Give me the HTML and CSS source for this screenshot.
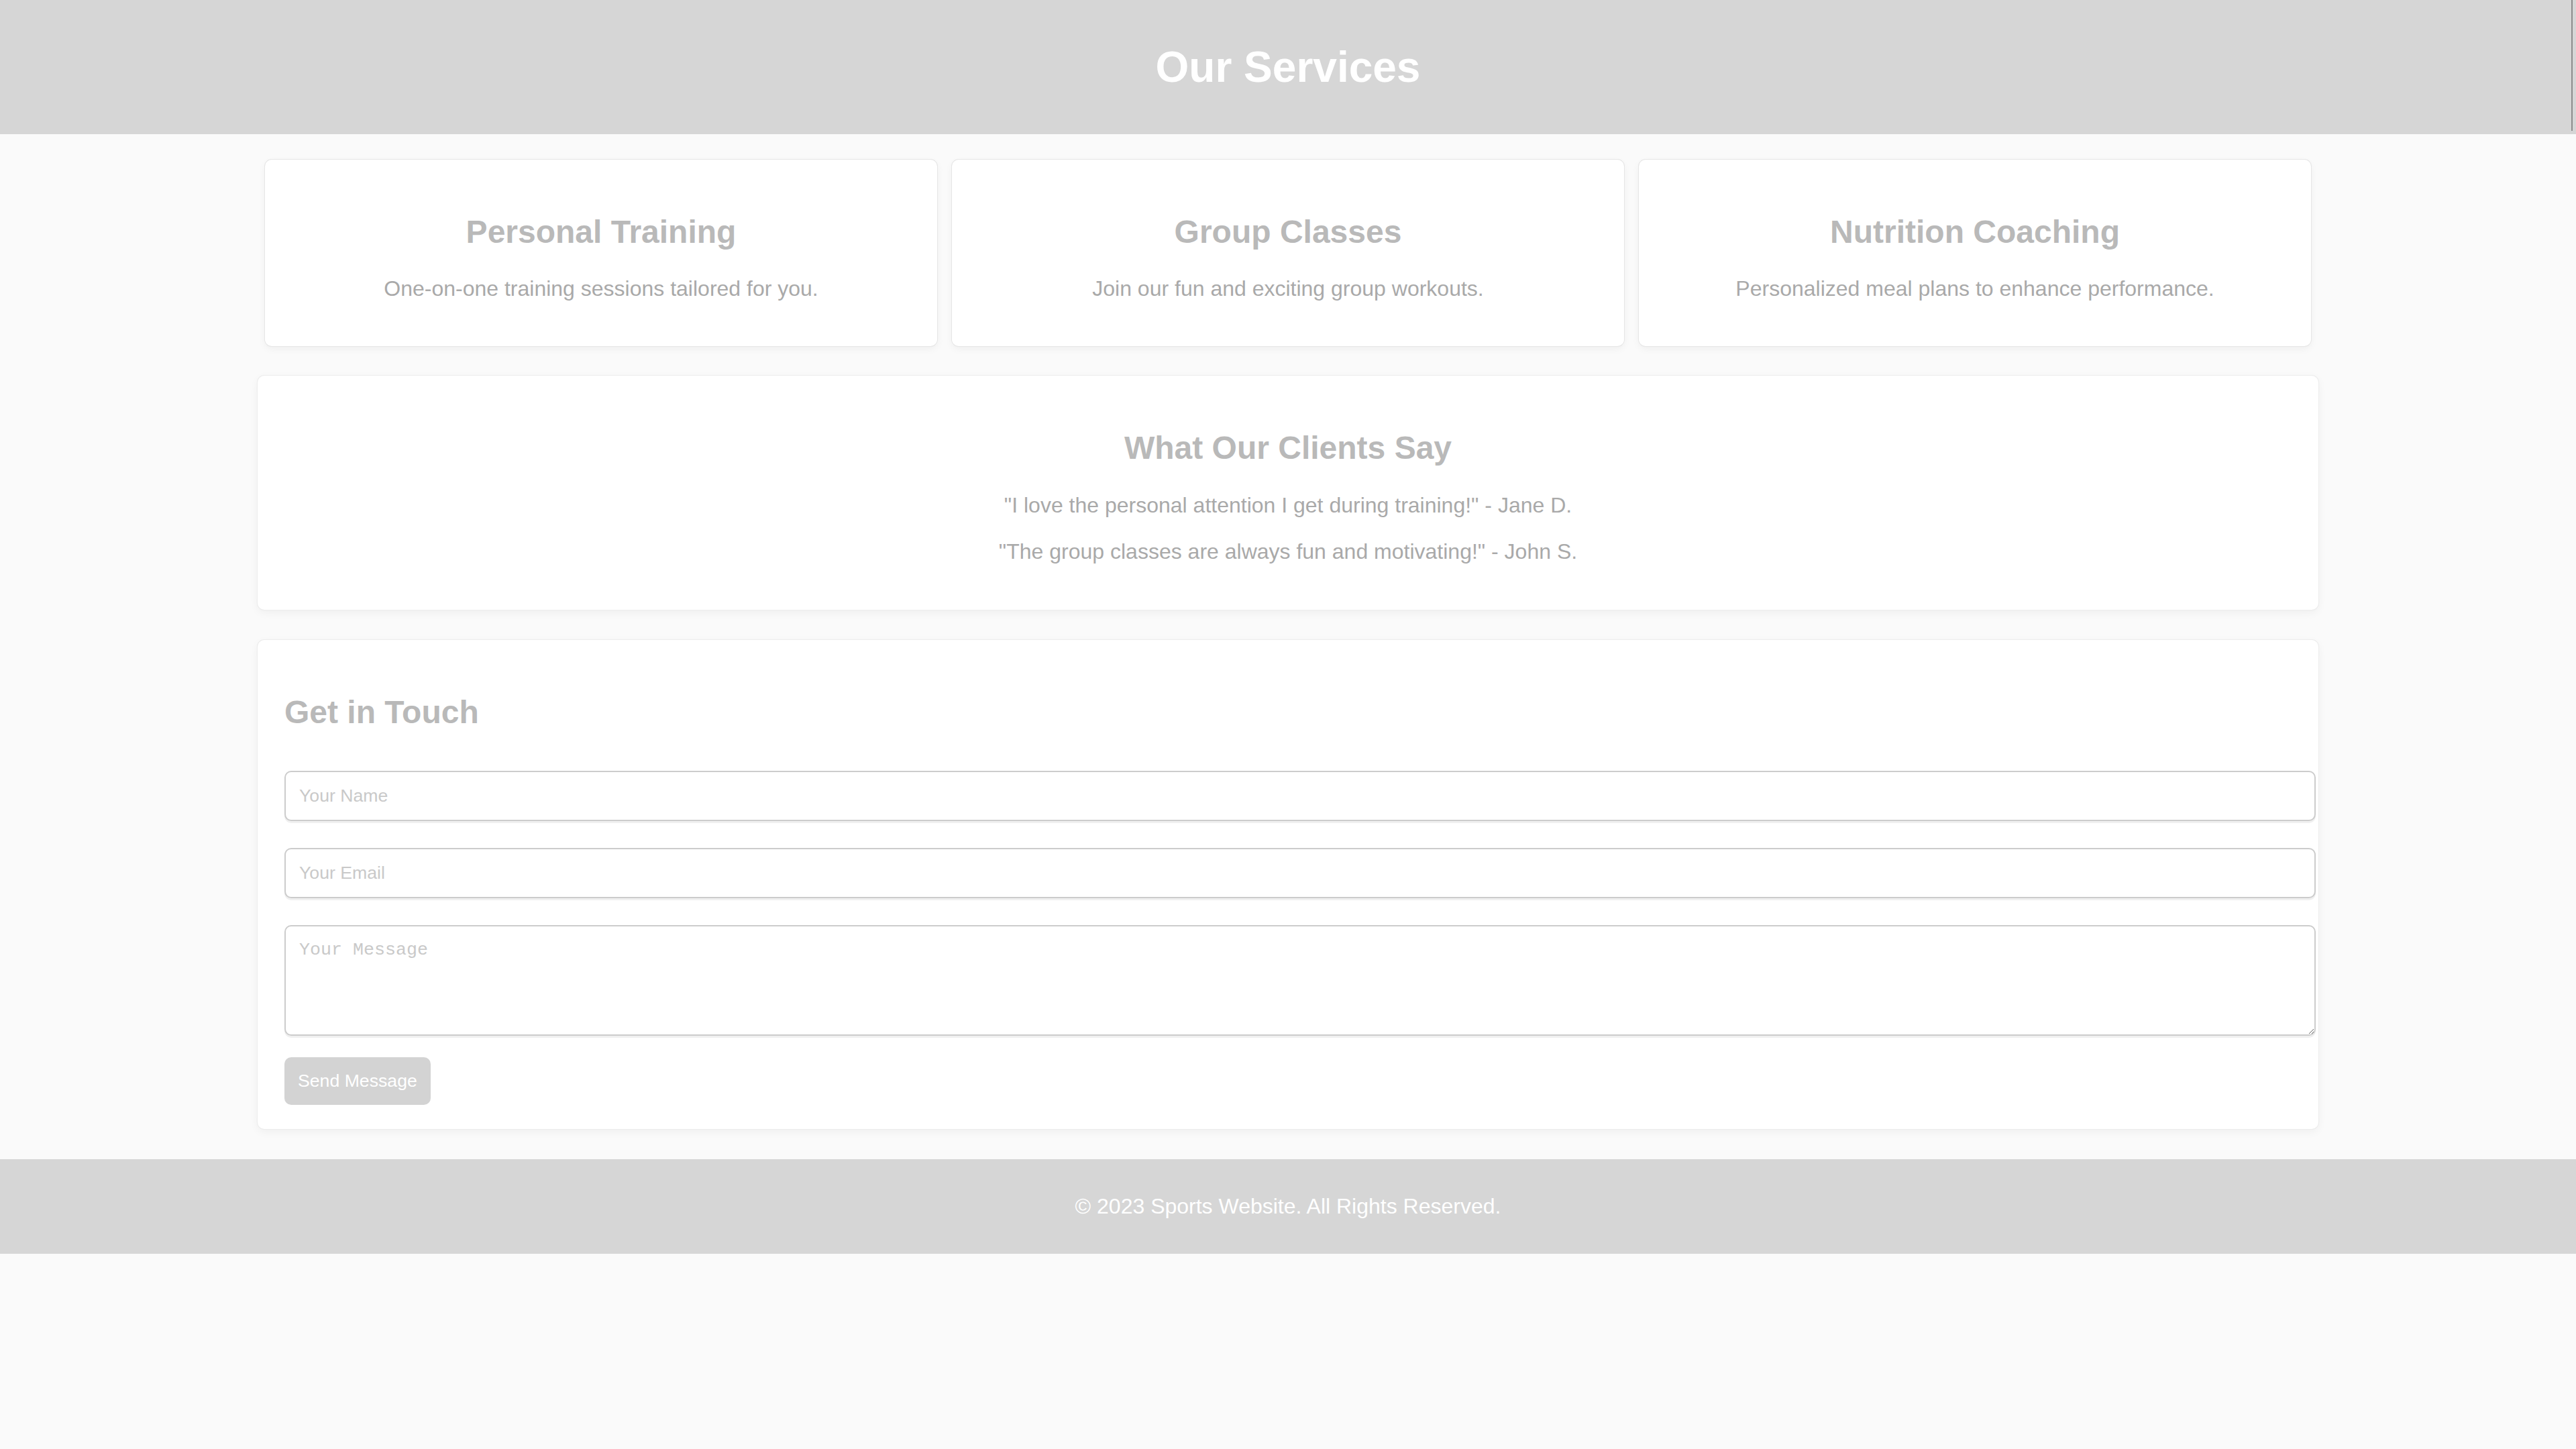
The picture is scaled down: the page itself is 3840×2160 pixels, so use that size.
FILE: index.html
```html
<!DOCTYPE html>
<html lang="en">
<head>
<meta charset="utf-8">
<title>Our Services</title>
<link rel="stylesheet" href="styles.css">
</head>
<body>
<header class="site-header">
  <h1 class="site-title">Our Services</h1>
</header>
<main>
  <section class="services">
    <div class="card">
      <h2 class="card-title">Personal Training</h2>
      <p class="card-text">One-on-one training sessions tailored for you.</p>
    </div>
    <div class="card">
      <h2 class="card-title">Group Classes</h2>
      <p class="card-text">Join our fun and exciting group workouts.</p>
    </div>
    <div class="card">
      <h2 class="card-title">Nutrition Coaching</h2>
      <p class="card-text">Personalized meal plans to enhance performance.</p>
    </div>
  </section>
  <section class="panel testimonials">
    <h2 class="panel-title">What Our Clients Say</h2>
    <p class="quote">"I love the personal attention I get during training!" - Jane D.</p>
    <p class="quote">"The group classes are always fun and motivating!" - John S.</p>
  </section>
  <section class="panel contact">
    <h2 class="panel-title">Get in Touch</h2>
    <form class="contact-form">
      <input class="field" type="text" placeholder="Your Name">
      <input class="field" type="email" placeholder="Your Email">
      <textarea class="field field-area" rows="4" placeholder="Your Message"></textarea>
      <button class="send-btn" type="button">Send Message</button>
    </form>
  </section>
</main>
<footer class="site-footer">
  <p class="footer-text">© 2023 Sports Website. All Rights Reserved.</p>
</footer>
</body>
</html>
```
FILE: styles.css
```css
html, body {
  margin: 0;
  padding: 0;
}
body {
  background: #fafafa;
  font-family: "Liberation Sans", Arial, sans-serif;
  font-size: 32px;
  color: #a8a8a8;
}
.site-header {
  position: relative;
  background: #d6d6d6;
  color: #ffffff;
  text-align: center;
  padding: 20px;
}
.site-header::after {
  content: "";
  position: absolute;
  top: 0;
  right: 5px;
  width: 2px;
  height: 195px;
  background: #8c8c8c;
}
.site-title {
  font-size: 64px;
  font-weight: bold;
  margin: 42.88px 0;
  line-height: normal;
}
.services {
  display: flex;
  justify-content: space-around;
  width: 80%;
  margin: 0 auto;
  padding: 38px 0 44px;
}
.card {
  width: 30%;
  padding: 40px 40px 35px;
  background: #ffffff;
  border-radius: 10px;
  text-align: center;
  box-shadow: 0 0 0 1px #e6e6e6, 0 4px 12px rgba(0, 0, 0, 0.05);
}
.card-title, .panel-title {
  font-size: 48px;
  font-weight: bold;
  margin: 39.84px 0;
  color: #b9b9b9;
  line-height: normal;
}
.card-text, .quote {
  margin: 32px 0;
  color: #a9a9a9;
  line-height: normal;
}
.panel {
  box-sizing: border-box;
  width: 80%;
  margin: 0 auto 45px;
  padding: 40px;
  background: #ffffff;
  border-radius: 10px;
  box-shadow: 0 0 0 1px #ececec, 0 4px 14px rgba(0, 0, 0, 0.05);
}
.testimonials {
  text-align: center;
  padding-bottom: 36px;
}
.contact {
  text-align: left;
  padding-bottom: 36px;
}
.contact-form {
  display: flex;
  flex-direction: column;
  align-items: flex-start;
}
.field {
  display: block;
  box-sizing: border-box;
  width: calc(100% + 36px);
  margin: 20px 0;
  padding: 20px;
  border: 2px solid #cccccc;
  border-radius: 10px;
  background: #ffffff;
  font-family: "Liberation Sans", Arial, sans-serif;
  font-size: 26.67px;
  line-height: normal;
  color: #999999;
  box-shadow: 0 3px 0 #f0f0f0;
}
.field::placeholder {
  color: #c9c9c9;
}
.field-area {
  height: 165px;
  font-family: "Liberation Mono", "DejaVu Sans Mono", monospace;
  resize: both;
}
.send-btn {
  margin-top: 12px;
  padding: 20px;
  border: none;
  border-radius: 10px;
  background: #d3d3d3;
  color: #ffffff;
  font-family: "Liberation Sans", Arial, sans-serif;
  font-size: 26.67px;
  line-height: normal;
  cursor: pointer;
}
.site-footer {
  background: #d6d6d6;
  color: #ffffff;
  text-align: center;
  padding: 20px;
}
.footer-text {
  margin: 32px 0;
  line-height: normal;
}
```
